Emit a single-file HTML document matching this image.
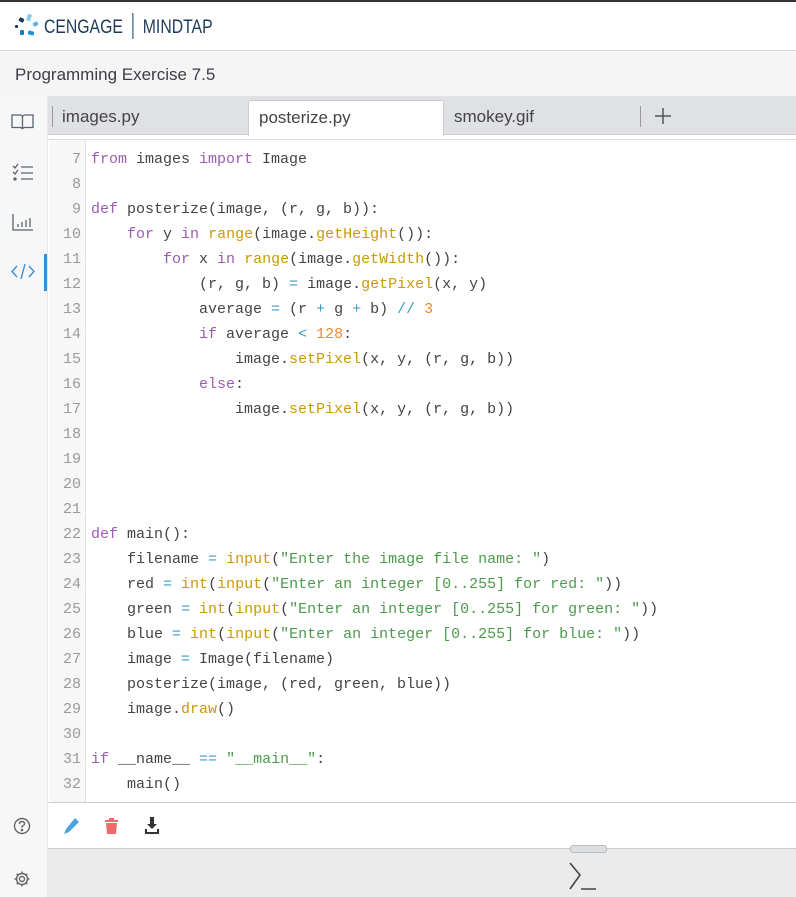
<!DOCTYPE html>
<html><head><meta charset="utf-8"><style>
*{margin:0;padding:0;box-sizing:border-box}
body{width:796px;height:897px;overflow:hidden;font-family:"Liberation Sans",sans-serif;background:#fff;position:relative}
.top{position:absolute;left:0;top:0;width:796px;height:51px;background:#fff;border-top:2px solid #333;border-bottom:1px solid #ddd}
.logo{position:absolute;left:44px;top:11px;font-size:19px;color:#1d3a5c;white-space:nowrap;transform:scaleX(0.83);transform-origin:0 0}
.logo .sep{display:inline-block;width:2px;height:26px;background:#6d8aa6;vertical-align:-6px;margin:0 11px}
.mk{position:absolute;background:#1f8fd1;border-radius:1px}
.title{position:absolute;left:0;top:51px;width:796px;height:45px;background:#f5f5f5;font-size:17px;color:#3c3c4a;padding:14px 0 0 15px}
.side{position:absolute;left:0;top:96px;width:48px;height:801px;background:#f7f7f7;border-right:1px solid #e6e6e6}
.tabs{position:absolute;left:48px;top:96px;width:748px;height:39px;background:#dfe1e5;border-bottom:1px solid #ccc}
.tab{position:absolute;top:0;height:39px;font-size:17px;color:#444;padding-top:11px}
.code{position:absolute;left:48px;top:139px;width:748px;height:663px;background:#fff;border-top:1px solid #ddd}
.gut{position:absolute;left:2px;top:0;width:36px;height:663px;background:#f7f7f7;border-right:1px solid #e3e3e3}
.ln{position:absolute;left:0;width:33px;text-align:right;font:15px "Liberation Mono",monospace;color:#9a9a9a}
.cl{position:absolute;left:43px;font:15px "Liberation Mono",monospace;color:#444;white-space:pre}
.k{color:#9b5cb4}.f{color:#c99a06}.s{color:#4c9a4c}.n{color:#f08a2a}.o{color:#3a9bc4}
.tool{position:absolute;left:48px;top:802px;width:748px;height:47px;background:#fff;border-top:1px solid #ccc;border-bottom:1px solid #ccc}
.bot{position:absolute;left:48px;top:849px;width:748px;height:48px;background:#ebebeb}
</style></head><body>
<div class="top">
<div class="mk" style="left:27px;top:12px;width:4px;height:7px;background:#8cc8ee;transform:rotate(20deg)"></div>
<div class="mk" style="left:33px;top:20px;width:5px;height:4px;background:#5ab2e6;transform:rotate(-30deg)"></div>
<div class="mk" style="left:28px;top:29px;width:6px;height:4px;background:#1f8fd1;transform:rotate(15deg)"></div>
<div class="mk" style="left:20px;top:28px;width:4px;height:5px;background:#1a7cc0"></div>
<div class="mk" style="left:15px;top:23px;width:3px;height:3px;background:#1b3a5c"></div>
<div class="mk" style="left:19px;top:16px;width:5px;height:4px;background:#1b3a5c;transform:rotate(30deg)"></div>
<div class="logo">CENGAGE<span class="sep"></span>MINDTAP</div>
</div>
<div class="title">Programming Exercise 7.5</div>
<div class="side">
<svg style="position:absolute;left:11px;top:17px" width="23" height="17" viewBox="0 0 23 17" fill="none" stroke="#5a6470" stroke-width="1.3"><path d="M1 2h8q2 0 2.5 2v12q-.5-1.5-2.5-1.5H1z M22 2h-8q-2 0-2.5 2v12q.5-1.5 2.5-1.5h8z"/></svg>
<svg style="position:absolute;left:12px;top:67px" width="22" height="18" viewBox="0 0 22 18" fill="none" stroke="#5a6470" stroke-width="1.3"><path d="M1 3l2 2 3-4M9 4h12M1 9l2 2 3-4M9 10h12M9 16h12"/><circle cx="3" cy="16" r="1" fill="#5a6470"/></svg>
<svg style="position:absolute;left:12px;top:117px" width="22" height="18" viewBox="0 0 22 18" fill="none" stroke="#5a6470" stroke-width="1.3"><path d="M1 1v16h20M6 14v-3M10 14v-5M14 14v-7M18 14v-9"/></svg>
<svg style="position:absolute;left:11px;top:167px" width="24" height="17" viewBox="0 0 24 17" fill="none" stroke="#3a8fd1" stroke-width="1.4"><path d="M6 3l-5 5.5 5 5.5M18 3l5 5.5-5 5.5M14 1l-4 15"/></svg>
<div style="position:absolute;left:44px;top:158px;width:3px;height:37px;background:#3a8fd1"></div>
<svg style="position:absolute;left:13px;top:721px" width="18" height="18" viewBox="0 0 18 18" fill="none" stroke="#666" stroke-width="1.4"><circle cx="9" cy="9" r="7.5"/><path d="M6.5 7q0-2.5 2.5-2.5t2.5 2.3q0 1.5-2.5 2.5v1.5"/><circle cx="9" cy="13" r=".6" fill="#666"/></svg>
<svg style="position:absolute;left:13px;top:774px" width="18" height="18" viewBox="0 0 18 18" fill="none" stroke="#666" stroke-width="1.4"><circle cx="9" cy="9" r="2.5"/><path d="M9 1.5v2.5M9 14v2.5M1.5 9h2.5M14 9h2.5M3.7 3.7l1.8 1.8M12.5 12.5l1.8 1.8M3.7 14.3l1.8-1.8M12.5 5.5l1.8-1.8"/><circle cx="9" cy="9" r="5.5"/></svg>
</div>
<div class="tabs">
<div style="position:absolute;left:4px;top:10px;width:1px;height:21px;background:#999"></div>
<div class="tab" style="left:14px">images.py</div>
<div class="tab" style="left:200px;width:196px;top:4px;height:36px;background:#fff;border:1px solid #ccc;border-bottom:none;border-radius:3px 3px 0 0;padding:7px 0 0 10px">posterize.py</div>
<div class="tab" style="left:406px">smokey.gif</div>
<div style="position:absolute;left:592px;top:10px;width:1px;height:21px;background:#999"></div>
<svg style="position:absolute;left:607px;top:12px" width="16" height="16" viewBox="0 0 16 16" stroke="#555" stroke-width="1.5"><path d="M8 0v16M0 8h16"/></svg>
</div>
<div class="code">
<div class="gut"></div>
<div id="c"></div>
</div>
<div class="tool">
<svg style="position:absolute;left:14px;top:14px" width="18" height="18" viewBox="0 0 18 18"><path d="M13 1l4 4-10 10-5 2 2-5z" fill="#4da3e0"/></svg>
<svg style="position:absolute;left:56px;top:14px" width="15" height="18" viewBox="0 0 15 18"><path d="M1 3h13v2H1zM5 1h5v2H5zM2 6h11l-1 11H3z" fill="#ef6b6b"/></svg>
<svg style="position:absolute;left:96px;top:14px" width="16" height="18" viewBox="0 0 16 18"><path d="M6 0h4v7h3l-5 5-5-5h3zM1 12h2v3h10v-3h2v5H1z" fill="#333"/></svg>
</div>
<div class="bot">
<div style="position:absolute;left:522px;top:-4px;width:37px;height:8px;background:#dde0e3;border:1px solid #bbb;border-radius:3px"></div>
<svg style="position:absolute;left:520px;top:12px" width="44" height="30" viewBox="0 0 44 30" fill="none" stroke="#444" stroke-width="1.6"><path d="M2 2l10 12-10 14M13 28h15"/></svg>
</div>
<script>
var L=[
[7,'<span class="k">from</span> images <span class="k">import</span> Image'],
[8,''],
[9,'<span class="k">def</span> posterize(image, (r, g, b)):'],
[10,'    <span class="k">for</span> y <span class="k">in</span> <span class="f">range</span>(image.<span class="f">getHeight</span>()):'],
[11,'        <span class="k">for</span> x <span class="k">in</span> <span class="f">range</span>(image.<span class="f">getWidth</span>()):'],
[12,'            (r, g, b) <span class="o">=</span> image.<span class="f">getPixel</span>(x, y)'],
[13,'            average <span class="o">=</span> (r <span class="o">+</span> g <span class="o">+</span> b) <span class="o">//</span> <span class="n">3</span>'],
[14,'            <span class="k">if</span> average <span class="o">&lt;</span> <span class="n">128</span>:'],
[15,'                image.<span class="f">setPixel</span>(x, y, (r, g, b))'],
[16,'            <span class="k">else</span>:'],
[17,'                image.<span class="f">setPixel</span>(x, y, (r, g, b))'],
[18,''],[19,''],[20,''],[21,''],
[22,'<span class="k">def</span> main():'],
[23,'    filename <span class="o">=</span> <span class="f">input</span>(<span class="s">"Enter the image file name: "</span>)'],
[24,'    red <span class="o">=</span> <span class="f">int</span>(<span class="f">input</span>(<span class="s">"Enter an integer [0..255] for red: "</span>))'],
[25,'    green <span class="o">=</span> <span class="f">int</span>(<span class="f">input</span>(<span class="s">"Enter an integer [0..255] for green: "</span>))'],
[26,'    blue <span class="o">=</span> <span class="f">int</span>(<span class="f">input</span>(<span class="s">"Enter an integer [0..255] for blue: "</span>))'],
[27,'    image <span class="o">=</span> Image(filename)'],
[28,'    posterize(image, (red, green, blue))'],
[29,'    image.<span class="f">draw</span>()'],
[30,''],
[31,'<span class="k">if</span> __name__ <span class="o">==</span> <span class="s">"__main__"</span>:'],
[32,'    main()']];
var h='';
L.forEach(function(l,i){var t=11+i*25;h+='<div class="ln" style="top:'+t+'px">'+l[0]+'</div><div class="cl" style="top:'+t+'px">'+l[1]+'</div>';});
document.getElementById('c').innerHTML=h;
</script>
</body></html>
